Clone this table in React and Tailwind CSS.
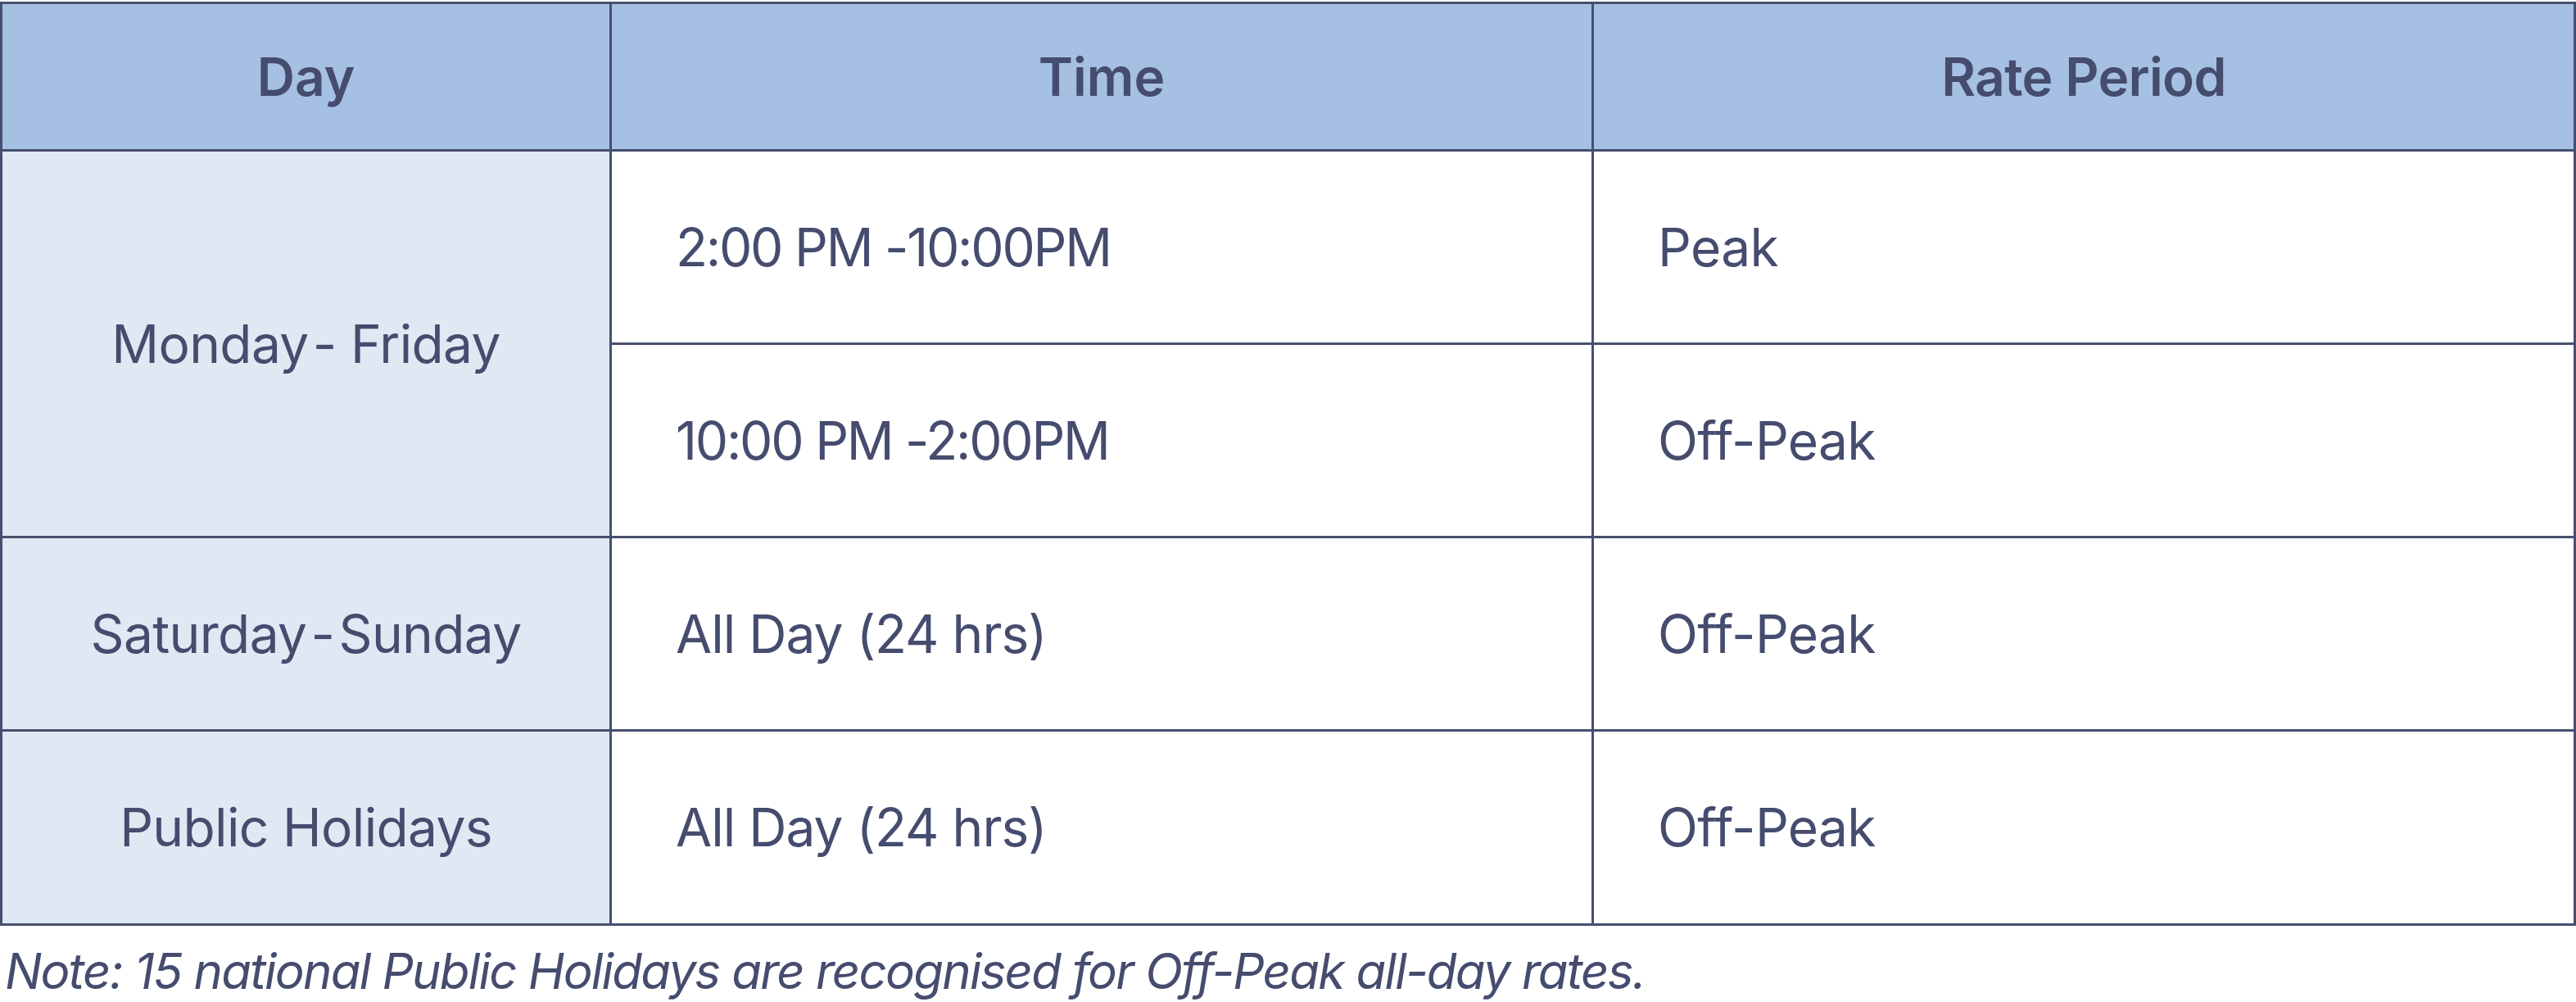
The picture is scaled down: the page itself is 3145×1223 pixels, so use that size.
import React from 'react';

const rows = [
  { time: '2:00 PM -10:00PM', rate: 'Peak' },
  { time: '10:00 PM -2:00PM', rate: 'Off-Peak' },
];

const other = [
  { day: 'Saturday\u200A-\u200ASunday', time: 'All Day (24 hrs)', rate: 'Off-Peak' },
  { day: 'Public Holidays', time: 'All Day (24 hrs)', rate: 'Off-Peak' },
];

const App = () => {
  return (
    <div className="min-h-screen w-full bg-white pt-[2px] font-['Inter','Noto_Sans',sans-serif] text-[#454c6e]">
      {/* Table: grid background shows through the gaps as borders */}
      <div className="grid grid-cols-[741px_1fr_1fr] grid-rows-[177px_233px_233px_233px_234px] gap-[3px] bg-[#474f6e] p-[3px]">
        {/* Header */}
        <div className="flex items-center justify-center bg-[#a6c0e3] text-[64px] font-semibold">Day</div>
        <div className="flex items-center justify-center bg-[#a6c0e3] text-[64px] font-semibold">Time</div>
        <div className="flex items-center justify-center bg-[#a6c0e3] text-[64px] font-semibold tracking-[-0.01em]">Rate Period</div>

        {/* Monday - Friday spans two rows */}
        <div className="row-span-2 flex items-center justify-center bg-[#dfe8f3] text-[64px] tracking-[-0.01em]">
          Monday{'\u200A'}- Friday
        </div>
        {rows.map((r, i) => (
          <React.Fragment key={i}>
            <div className="flex items-center bg-white pl-[78px] text-[64px] tracking-[-0.035em]">{r.time}</div>
            <div className="flex items-center bg-white pl-[78px] text-[64px] tracking-[-0.01em]">{r.rate}</div>
          </React.Fragment>
        ))}

        {other.map((r) => (
          <React.Fragment key={r.day}>
            <div className="flex items-center justify-center bg-[#dfe8f3] text-[64px] tracking-[-0.01em]">{r.day}</div>
            <div className="flex items-center bg-white pl-[78px] text-[64px] tracking-[-0.015em]">{r.time}</div>
            <div className="flex items-center bg-white pl-[78px] text-[64px] tracking-[-0.01em]">{r.rate}</div>
          </React.Fragment>
        ))}
      </div>

      <p className="mt-[25px] pl-[6px] text-[60px] italic leading-none tracking-[-0.03em]">
        Note: 15 national Public Holidays are recognised for Off-Peak all-day rates.
      </p>
    </div>
  );
};

export default App;
